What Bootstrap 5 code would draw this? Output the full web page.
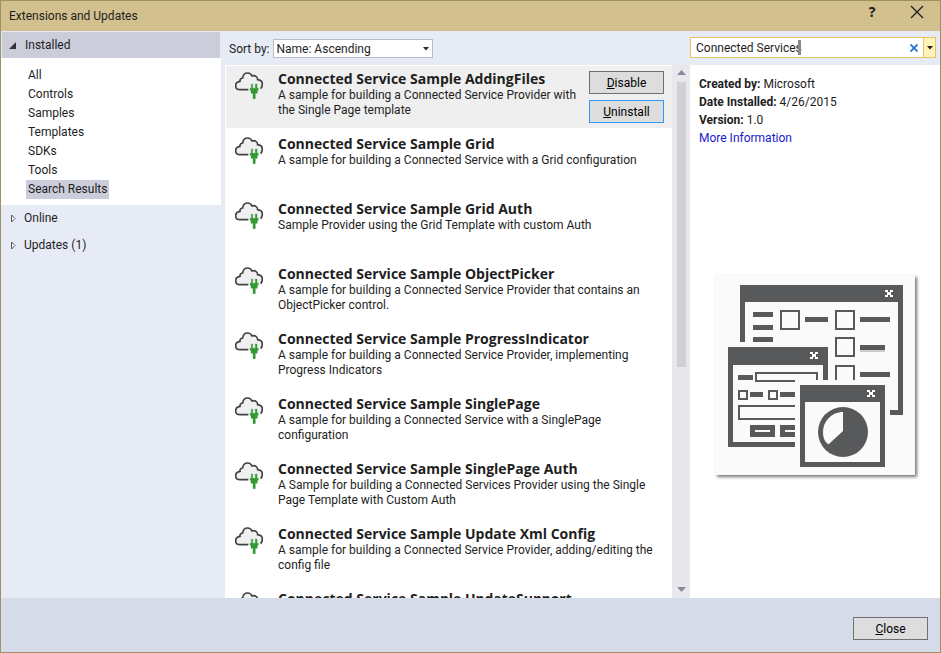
<!DOCTYPE html>
<html lang="en">
<head>
<meta charset="utf-8">
<meta name="viewport" content="width=device-width, initial-scale=1">
<title>Extensions and Updates</title>
<link href="https://cdn.jsdelivr.net/npm/bootstrap@5.3.0/dist/css/bootstrap.min.css" rel="stylesheet">
<style>
  body { font-family: Roboto, "Open Sans", sans-serif; font-size: 12px; line-height: 15px; color: #1e1e1e; }
  button, input, select { font-family: inherit; font-size: 12px; }
  .dialog { background: #e6ebf5; border: 1px solid #a0915f; }
  .titlebar { background: #d2c08e; height: 30px; padding: 0 13px 0 8px; }
  .titlebar h1 { font-size: 12px; }
  .title-btn { border: 0; background: none; padding: 0; width: 20px; height: 20px; color: #1e1e1e; margin-bottom: 8px; }
  .help-btn { font-family: "Noto Sans", sans-serif; font-size: 14px; line-height: 20px; font-weight: 700; margin-right: 25px; }
  .sidebar { width: 220px; }
  .side-head { height: 27px; padding: 0 0 0 8px; border: 0; background: none; color: inherit; text-align: left; gap: 8px; }
  .side-head.open { background: #cccddb; height: 26px; margin: 1px 1px 0 1px; padding: 1px 0 0 7px; }
  .side-list { background: #fff; padding: 8px 0 6px 25px; }
  .side-list a { display: inline-block; line-height: 19px; padding: 0 2px; color: inherit; text-decoration: none; vertical-align: top; }
  .side-list li { height: 19px; }
  .side-list a.current { background: #cccddb; }
  .toolbar { height: 34px; padding: 1px 0 0 4px; gap: 3px; }
  .toolbar label { padding-top: 1px; }
  .sort-select { width: 160px; height: 19px; min-height: 0; font-size: 12px; line-height: 17px; border: 1px solid #b7bdd0; border-radius: 0; padding: 1px 18px 0 3px; background-color: #fff; background-image: none; color: #1e1e1e; }
  .sort-arrow { right: 4px; top: 8px; pointer-events: none; }
  .middle { padding-left: 4px; }
  .results { background: #fff; }
  .result { height: 65px; padding: 4px 14px 0 10px; gap: 15px; }
  .result.chosen { background: #efefef; height: 62px; margin: 1px 0 2px 1px; padding: 3px 8px 0 9px; }
  .result h2 { font-family: "Open Sans", "Noto Sans", sans-serif; font-size: 14px; line-height: 19px; font-weight: 700; margin: 0; white-space: nowrap; }
  .result p { margin: 0; }
  .result.chosen .summary { min-width: 0; }
  .cloud { width: 28px; height: 28px; margin-top: 3px; }
  .push { width: 75px; height: 23px; font-size: 12px; line-height: 19px; border: 1px solid #707070; background: #ddd; border-radius: 0; padding: 1px 0 0; color: #000; }
  .push:hover { background: #d0d0d0; color: #000; }
  .push.focused { border-color: #3399ff; }
  .push-stack { gap: 6px; padding-top: 2px; }
  .result.chosen { gap: 0; }
  .result.chosen .cloud { margin-right: 15px; }
  .scroller { width: 18px; background: #e8e8ec; padding: 5px 4px 6px; }
  .thumb { width: 9px; height: 285px; background: #d0d1d7; margin-top: 7px; }
  .details { width: 250px; }
  .search { height: 21px; margin: 6px 4px 7px 0; border: 1px solid #e5c365; background: #fff; }
  .search-text { border: 0; padding: 1px 0 0 5px; min-width: 0; color: #1e1e1e; outline: 0; background: transparent; }
  .caret { left: 107px; top: 2px; width: 3px; height: 15px; background: #8a8a8a; }
  .search-clear { border: 0; background: none; padding: 0; width: 18px; }
  .search-menu { border: 0; border-left: 1px solid #e5c365; background: #fff3b8; padding: 0; width: 12px; }
  .info { background: #fff; padding: 10px 8px 0 9px; line-height: 18px; }
  .info a { color: #1919d0; text-decoration: none; }
  .preview { width: 200px; height: 200px; margin: 128px 0 0 16px; background: #fafafa; box-shadow: 2px 2px 3px #777; }
  .footer-bar { background: #d6dbe9; height: 54px; padding: 7px 12px 0 0; }
</style>
<script src="https://cdn.jsdelivr.net/npm/bootstrap@5.3.0/dist/js/bootstrap.bundle.min.js"></script>
</head>
<body>
<svg class="d-none" aria-hidden="true">
  <symbol id="cloud" viewBox="0 0 84 84">
    <path d="M40 53H15C7 53 2 48 2 41c0-7 5-12 13-13-1-5 3-10 8-10C24 8 30 3 38 3c6 0 11 4 13 9 9-3 17 2 17 11 9 1 14 6 14 13 0 7-2 11-5 14" fill="#f0eff1" stroke="#424242" stroke-width="5"/>
    <path d="M49 36h4v13h8V36h5v13h4v6h-3v9h-6v16h-7V64h-6v-9h-3v-6h4z" fill="#339933" stroke="#339933"/>
  </symbol>
</svg>
<div class="dialog d-flex flex-column vh-100 overflow-hidden">
  <header class="titlebar d-flex align-items-center flex-shrink-0">
    <h1 class="m-0 me-auto fw-normal">Extensions and Updates</h1>
    <button class="title-btn help-btn" type="button" aria-label="Help">?</button>
    <button class="title-btn" type="button" aria-label="Close window"><svg width="14" height="14" viewBox="0 0 14 14" class="d-block m-auto"><path d="M1 1l12 12M13 1L1 13" stroke="#1e1e1e" stroke-width="1.3"/></svg></button>
  </header>
  <main class="d-flex flex-grow-1 overflow-hidden">
    <nav class="sidebar flex-shrink-0 d-flex flex-column" aria-label="Categories">
      <button class="side-head open d-flex align-items-center" type="button"><svg width="8" height="7" viewBox="0 0 8 7"><path d="M7 0v7H0z" fill="#333"/></svg>Installed</button>
      <ul class="side-list list-unstyled m-0">
        <li><a href="#">All</a></li>
        <li><a href="#">Controls</a></li>
        <li><a href="#">Samples</a></li>
        <li><a href="#">Templates</a></li>
        <li><a href="#">SDKs</a></li>
        <li><a href="#">Tools</a></li>
        <li><a href="#" class="current">Search Results</a></li>
      </ul>
      <button class="side-head d-flex align-items-center" type="button"><svg width="7" height="9" viewBox="0 0 7 9"><path d="M2.500 1v7l3.500-3.500z" fill="#fff" stroke="#555"/></svg>Online</button>
      <button class="side-head d-flex align-items-center" type="button"><svg width="7" height="9" viewBox="0 0 7 9"><path d="M2.500 1v7l3.500-3.500z" fill="#fff" stroke="#555"/></svg>Updates (1)</button>
    </nav>
    <section class="middle d-flex flex-column flex-grow-1 overflow-hidden">
      <div class="toolbar d-flex align-items-center flex-shrink-0">
        <label for="sort">Sort by:</label>
        <div class="position-relative d-flex">
          <select id="sort" class="sort-select form-select"><option>Name: Ascending</option></select>
          <svg class="sort-arrow position-absolute" width="6" height="4" viewBox="0 0 6 4"><path d="M0 0h6L3 3.500z" fill="#1b293e"/></svg>
        </div>
      </div>
      <div class="d-flex flex-grow-1 overflow-hidden">
        <div class="results flex-grow-1 overflow-hidden">
          <article class="result chosen d-flex">
            <svg class="cloud flex-shrink-0"><use href="#cloud"/></svg>
            <div class="summary flex-grow-1"><h2>Connected Service Sample AddingFiles</h2><p>A sample for building a Connected Service Provider with the Single Page template</p></div>
            <div class="push-stack d-flex flex-column flex-shrink-0">
              <button class="push btn" type="button"><u>D</u>isable</button>
              <button class="push focused btn" type="button"><u>U</u>ninstall</button>
            </div>
          </article>
          <article class="result d-flex"><svg class="cloud flex-shrink-0"><use href="#cloud"/></svg><div><h2>Connected Service Sample Grid</h2><p>A sample for building a Connected Service with a Grid configuration</p></div></article>
          <article class="result d-flex"><svg class="cloud flex-shrink-0"><use href="#cloud"/></svg><div><h2>Connected Service Sample Grid Auth</h2><p>Sample Provider using the Grid Template with custom Auth</p></div></article>
          <article class="result d-flex"><svg class="cloud flex-shrink-0"><use href="#cloud"/></svg><div><h2>Connected Service Sample ObjectPicker</h2><p>A sample for building a Connected Service Provider that contains an ObjectPicker control.</p></div></article>
          <article class="result d-flex"><svg class="cloud flex-shrink-0"><use href="#cloud"/></svg><div><h2>Connected Service Sample ProgressIndicator</h2><p>A sample for building a Connected Service Provider, implementing Progress Indicators</p></div></article>
          <article class="result d-flex"><svg class="cloud flex-shrink-0"><use href="#cloud"/></svg><div><h2>Connected Service Sample SinglePage</h2><p>A sample for building a Connected Service with a SinglePage configuration</p></div></article>
          <article class="result d-flex"><svg class="cloud flex-shrink-0"><use href="#cloud"/></svg><div><h2>Connected Service Sample SinglePage Auth</h2><p>A Sample for building a Connected Services Provider using the Single Page Template with Custom Auth</p></div></article>
          <article class="result d-flex"><svg class="cloud flex-shrink-0"><use href="#cloud"/></svg><div><h2>Connected Service Sample Update Xml Config</h2><p>A sample for building a Connected Service Provider, adding/editing the config file</p></div></article>
          <article class="result d-flex"><svg class="cloud flex-shrink-0"><use href="#cloud"/></svg><div><h2>Connected Service Sample UpdateSupport</h2></div></article>
        </div>
        <div class="scroller d-flex flex-column align-items-center flex-shrink-0" aria-hidden="true">
          <svg class="flex-shrink-0" width="9" height="5" viewBox="0 0 9 5"><path d="M4.500 0L9 5H0z" fill="#868999"/></svg>
          <div class="thumb"></div>
          <svg class="mt-auto flex-shrink-0" width="9" height="5" viewBox="0 0 9 5"><path d="M0 0h9L4.500 5z" fill="#868999"/></svg>
        </div>
      </div>
    </section>
    <aside class="details d-flex flex-column flex-shrink-0">
      <div class="search d-flex flex-shrink-0 position-relative">
        <input class="search-text flex-grow-1" type="text" value="Connected Services" aria-label="Search">
        <span class="caret position-absolute"></span>
        <button class="search-clear" type="button" aria-label="Clear search"><svg class="d-block m-auto" width="8" height="8" viewBox="0 0 8 8"><path d="M.5.5l7 7M7.500.5l-7 7" stroke="#1c77c7" stroke-width="1.800"/></svg></button>
        <button class="search-menu" type="button" aria-label="Search options"><svg class="d-block m-auto" width="6" height="4" viewBox="0 0 6 4"><path d="M0 0h6L3 3.500z" fill="#1e1e1e"/></svg></button>
      </div>
      <div class="info flex-grow-1">
        <div><b>Created by:</b> Microsoft</div>
        <div><b>Date Installed:</b> 4/26/2015</div>
        <div><b>Version:</b> 1.0</div>
        <a href="#">More Information</a>
        <svg class="preview d-block" viewBox="30 30 600 600" shape-rendering="crispEdges" role="img" aria-label="Extension preview">
          <g fill="#58595b">
            <path d="M105 60h489v390h-39v-15h24V111H120v120h-15z"/>
            <path d="M144 141h60v15h-60zM144 180h60v15h-60zM144 216h60v15h-60zM300 156h69v15h-69zM465 156h90v15h-90zM465 240h75v15h-75zM465 321h90v15h-90z"/>
            <path d="M69 246h300v99h-15v-45H84v231h186v15H69z"/>
            <path d="M99 330h45v15H99zM135 381h39v15h-39zM225 381h45v15h-45z"/>
            <path fill-rule="evenodd" d="M135 480h75v36h-75zM150 495v6h45v-6zM225 480h45v15h-30v6h30v15h-45z"/>
            <path fill-rule="evenodd" d="M285 360h255v246H285zM300 411v180h225V411z"/>
          </g>
          <path d="M465 255h75v6h-75z" fill="#ccc"/>
          <g fill="none" stroke="#58595b" stroke-width="6">
            <path d="M228 138h54v54h-54zM393 138h54v54h-54zM393 219h54v54h-54zM393 345v-42h54v42M270 348H153v-24h183v21M102 378h24v24h-24zM192 378h24v24h-24zM270 423H102v39h168"/>
          </g>
          <g shape-rendering="auto"><circle cx="414" cy="501" r="75" fill="#58595b"/><path d="M414 441v57l-43 40c-11-6-17-19-17-37 0-32 26-60 60-60z" fill="#fafafa"/></g>
          <g fill="#fff">
            <path id="px" d="M540 75h8v6h8v-6h8v6h-6v9h6v6h-8v-6h-8v6h-8v-6h6v-9h-6z"/>
            <use href="#px" x="-225" y="187"/>
            <use href="#px" x="-54" y="300"/>
          </g>
        </svg>
      </div>
    </aside>
  </main>
  <footer class="footer-bar d-flex align-items-center justify-content-end flex-shrink-0">
    <button class="push btn" type="button"><u>C</u>lose</button>
  </footer>
</div>
</body>
</html>
